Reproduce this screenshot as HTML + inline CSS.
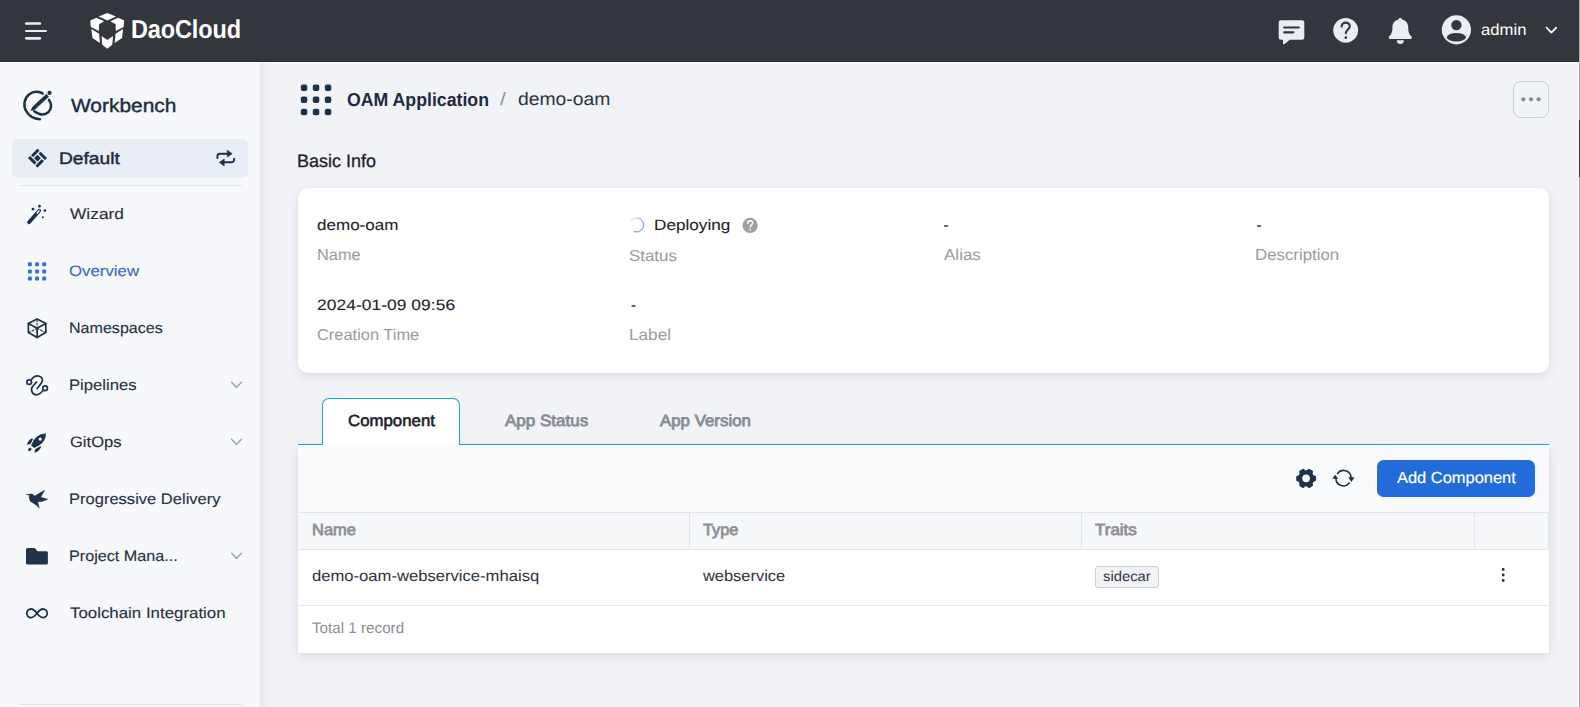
<!DOCTYPE html>
<html lang="en">
<head>
<meta charset="utf-8">
<title>OAM Application - demo-oam</title>
<style>
*{box-sizing:border-box;margin:0;padding:0}
html,body{width:1580px;height:707px;overflow:hidden;background:#f1f3f7}
body{position:relative;font-family:"Liberation Sans",sans-serif;color:#1f2329}
.abs{position:absolute}
.t{position:absolute;white-space:nowrap;line-height:20px;height:20px;transform-origin:0 50%;text-rendering:geometricPrecision}
svg{position:absolute;overflow:visible}
/* header */
#hdr{left:0;top:0;width:1579px;height:62px;background:#33363c;border-bottom:1px solid #2a2d32}
#hline{left:0;top:62px;width:1579px;height:1px;background:#fff}
/* sidebar */
#side{left:0;top:63px;width:260px;height:644px;background:#f6f8fc}
#sideshadow{left:260px;top:63px;width:12px;height:644px;background:linear-gradient(90deg,rgba(0,0,0,.05),rgba(0,0,0,.03) 18%,rgba(0,0,0,.016) 45%,rgba(0,0,0,.006) 75%,rgba(0,0,0,0))}
#defbox{left:12px;top:139px;width:236px;height:39px;border-radius:6px;background:#e9edf6}
.divd{left:19px;width:223px;height:1px;background:#e2e5eb}
.mi{color:#27313f;font-size:15.1px;-webkit-text-stroke:.12px #27313f}
/* main */
#card{left:298px;top:188px;width:1251px;height:185px;border-radius:10px;background:#fff;box-shadow:0 3px 10px rgba(0,0,0,.10)}
.val{font-size:15px;color:#1f2329;-webkit-text-stroke:.1px #1f2329}
.lab{font-size:15.85px;color:#9b9da3;-webkit-text-stroke:.05px #9b9da3}
#panel{left:298px;top:445px;width:1251px;height:208px;background:#fff;box-shadow:0 3px 10px rgba(0,0,0,.11)}
#tbar{left:298px;top:445px;width:1251px;height:67px;background:#f9fafc}
#thead{left:298px;top:512px;width:1251px;height:38px;background:#f7f8fa;border-top:1px solid #e3e6ec;border-bottom:1px solid #e3e6ec}
.vsep{top:513px;width:1px;height:36px;background:#e3e6ec}
#rowline{left:298px;top:605px;width:1251px;height:1px;background:#e6e8ed}
#tabline{left:298px;top:444px;width:1251px;height:1px;background:#1f9ae6}
#tab1{left:322px;top:398px;width:138px;height:47px;border:1px solid #1f9ae6;border-bottom:0;border-radius:7px 7px 0 0;background:#fff}
.th{font-size:16px;color:#8e9096;-webkit-text-stroke:.8px #8e9096}
.td{font-size:15.5px;color:#30353d;-webkit-text-stroke:.05px #30353d}
#btn{left:1377px;top:460px;width:158px;height:37px;border-radius:6.5px;background:#236bda}
#morebtn{left:1513px;top:81px;width:36px;height:37px;border:1px solid #c9ceda;border-radius:8px}
#tag{left:1095px;top:566px;width:64px;height:22px;border:1px solid #c9cdd5;border-radius:3px;background:#f2f3f6}
#rstrip{left:1579px;top:0;width:1px;height:707px;background:#a6a8ab}
#rstrip2{left:1578px;top:63px;width:1px;height:644px;background:#fafbfc}
#rdark{left:1579px;top:120px;width:1px;height:57px;background:#2e3136}
</style>
</head>
<body>
<!-- backgrounds -->
<div class="abs" id="side"></div>
<div class="abs" id="sideshadow"></div>
<div class="abs" id="hdr"></div>
<div class="abs" id="hline"></div>

<!-- header text -->
<div class="t" id="x_dao" style="left:130.5px;top:19.8px;font-size:25.9px;font-weight:bold;color:#fff;transform:scaleX(0.9072);letter-spacing:-0.13px">DaoCloud</div>
<div class="t" id="x_admin" style="left:1480.9px;top:20.6px;font-size:16px;color:#fff;transform:scaleX(1.0423);letter-spacing:0.0px">admin</div>

<!-- sidebar -->
<div class="t" id="x_wb" style="left:71.1px;top:96.7px;font-size:19.0px;color:#1d2b3f;-webkit-text-stroke:.4px #1d2b3f;transform:scaleX(1.1003);letter-spacing:0.0px">Workbench</div>
<div class="abs" id="defbox"></div>
<div class="t" id="x_def" style="left:59.2px;top:149.2px;font-size:16.6px;-webkit-text-stroke:.45px #1d2b3f;color:#1d2b3f;transform:scaleX(1.1566);letter-spacing:-0.0px">Default</div>
<div class="abs divd" style="top:185px"></div>
<div class="t mi" id="x_m1" style="left:70.2px;top:204.6px;transform:scaleX(1.149);letter-spacing:0.0px">Wizard</div>
<div class="t mi" id="x_m2" style="left:69.2px;top:261.6px;color:#3c6fdc;transform:scaleX(1.113);letter-spacing:0.0px">Overview</div>
<div class="t mi" id="x_m3" style="left:68.5px;top:318.8px;transform:scaleX(1.0648);letter-spacing:0.0px">Namespaces</div>
<div class="t mi" id="x_m4" style="left:69.4px;top:375.7px;transform:scaleX(1.103);letter-spacing:-0.0px">Pipelines</div>
<div class="t mi" id="x_m5" style="left:70.3px;top:432.7px;transform:scaleX(1.0964);letter-spacing:0.0px">GitOps</div>
<div class="t mi" id="x_m6" style="left:69.4px;top:489.5px;transform:scaleX(1.0949);letter-spacing:0.0px">Progressive Delivery</div>
<div class="t mi" id="x_m7" style="left:68.5px;top:546.8px;transform:scaleX(1.072);letter-spacing:0.0px">Project Mana...</div>
<div class="t mi" id="x_m8" style="left:70.4px;top:604.0px;transform:scaleX(1.1171);letter-spacing:0.0px">Toolchain Integration</div>
<div class="abs divd" style="top:704px"></div>

<!-- breadcrumb -->
<div class="t" id="x_oam" style="left:347.1px;top:89.5px;font-size:18.75px;font-weight:bold;color:#1d2b3f;transform:scaleX(0.9442);letter-spacing:0.0px">OAM Application</div>
<div class="t" id="x_slash" style="left:499.8px;top:88.5px;font-size:18.0px;color:#8d929b;transform:scaleX(1.16);letter-spacing:0px">/</div>
<div class="t" id="x_bc" style="left:518.3px;top:88.5px;font-size:18.0px;color:#2b3340;transform:scaleX(1.0742);letter-spacing:0.0px">demo-oam</div>
<div class="abs" id="morebtn"></div>
<div class="t" id="x_basic" style="left:297.4px;top:151.3px;font-size:18.0px;color:#1f2329;-webkit-text-stroke:.3px #1f2329;transform:scaleX(0.9994);letter-spacing:0.0px">Basic Info</div>

<!-- card -->
<div class="abs" id="card"></div>
<div class="t val" id="x_v1" style="left:317.4px;top:215.5px;transform:scaleX(1.1353);letter-spacing:0.0px">demo-oam</div>
<div class="t lab" id="x_l1" style="left:316.8px;top:246.2px;transform:scaleX(1.0312);letter-spacing:0.0px">Name</div>
<div class="t val" id="x_v2" style="left:653.6px;top:215.5px;transform:scaleX(1.1437);letter-spacing:0.0px">Deploying</div>
<div class="t lab" id="x_l2" style="left:628.8px;top:247.1px;transform:scaleX(1.0664);letter-spacing:0.0px">Status</div>
<div class="t val" id="x_v3" style="left:943.5px;top:215.5px">-</div>
<div class="t lab" id="x_l3" style="left:944.2px;top:246.2px;transform:scaleX(1.0738);letter-spacing:0.0px">Alias</div>
<div class="t val" id="x_v4" style="left:1256.5px;top:215.5px">-</div>
<div class="t lab" id="x_l4" style="left:1255.2px;top:246.2px;transform:scaleX(1.0625);letter-spacing:0.0px">Description</div>
<div class="t val" id="x_v5" style="left:316.6px;top:296.2px;transform:scaleX(1.16);letter-spacing:0.04px">2024-01-09 09:56</div>
<div class="t lab" id="x_l5" style="left:316.6px;top:326.3px;transform:scaleX(1.0363);letter-spacing:0.0px">Creation Time</div>
<div class="t val" id="x_v6" style="left:631.1px;top:296.2px">-</div>
<div class="t lab" id="x_l6" style="left:628.9px;top:326.3px;transform:scaleX(1.0845);letter-spacing:0.0px">Label</div>

<!-- tabs + table -->
<div class="abs" id="panel"></div>
<div class="abs" id="tbar"></div>
<div class="abs" id="thead"></div>
<div class="abs vsep" style="left:689px"></div>
<div class="abs vsep" style="left:1081px"></div>
<div class="abs vsep" style="left:1474px"></div>
<div class="abs vsep" style="left:1548px"></div>
<div class="abs" id="rowline"></div>
<div class="abs" id="tabline"></div>
<div class="abs" id="tab1"></div>
<div class="t" id="x_tab1" style="left:347.7px;top:411.4px;font-size:16.1px;-webkit-text-stroke:.6px #1f2329;color:#1f2329;transform:scaleX(1.0444);letter-spacing:0.0px">Component</div>
<div class="t" id="x_tab2" style="left:504.6px;top:411.4px;font-size:16.1px;-webkit-text-stroke:.8px #878c96;color:#878c96;transform:scaleX(1.0559);letter-spacing:0.0px">App Status</div>
<div class="t" id="x_tab3" style="left:659.5px;top:411.4px;font-size:16.1px;-webkit-text-stroke:.8px #878c96;color:#878c96;transform:scaleX(1.0473);letter-spacing:0.0px">App Version</div>
<div class="abs" id="btn"></div>
<div class="t" id="x_btn" style="left:1396.5px;top:468.6px;font-size:16px;color:#fff;-webkit-text-stroke:.2px #fff;transform:scaleX(1.0273);letter-spacing:0.0px">Add Component</div>
<div class="t th" id="x_h1" style="left:311.9px;top:521.2px;transform:scaleX(1.0286);letter-spacing:-0.0px">Name</div>
<div class="t th" id="x_h2" style="left:703.4px;top:521.2px;transform:scaleX(1.0202);letter-spacing:0.0px">Type</div>
<div class="t th" id="x_h3" style="left:1095.1px;top:521.2px;transform:scaleX(1.0609);letter-spacing:0.0px">Traits</div>
<div class="t td" id="x_r1" style="left:311.8px;top:566.7px;transform:scaleX(1.0721);letter-spacing:0.0px">demo-oam-webservice-mhaisq</div>
<div class="t td" id="x_r2" style="left:703.4px;top:566.7px;transform:scaleX(1.0593);letter-spacing:0.0px">webservice</div>
<div class="abs" id="tag"></div>
<div class="t" id="x_tag" style="left:1102.6px;top:565.6px;font-size:14px;color:#30353d;transform:scaleX(1.0568);letter-spacing:0.0px">sidecar</div>
<div class="t" id="x_tot" style="left:311.8px;top:618.7px;font-size:15.2px;color:#8c9098;transform:scaleX(1.001);letter-spacing:0.0px">Total 1 record</div>

<svg id="icons" width="1580" height="707" viewBox="0 0 1580 707" style="left:0;top:0">
<!-- hamburger -->
<g stroke="#e8eefb" stroke-width="2.7" stroke-linecap="round" fill="none">
<path d="M26.3 23.5H39.8"/><path d="M26 30.9H46" stroke-width="2"/><path d="M26.3 38.3H39.8"/>
</g>
<!-- logo cube -->
<g fill="#fff">
<polygon points="98.8,16.5 107.3,12.9 116,16.5 107.3,20.5"/>
<polygon points="90.2,20.4 96.4,17.8 104.2,21.3 99.1,24.3 98.8,31.1 90.8,26.9"/>
<polygon points="124.2,20.4 118.2,17.8 110.4,21.3 115.6,24.3 115.8,31.1 123.6,26.9"/>
<polygon points="91.3,29.1 99.1,33.7 99.9,43.1 92.5,37.9"/>
<polygon points="123,29.1 115.6,33.7 114.6,43.1 122.1,37.9"/>
<polygon points="101.6,36.1 107.3,39.9 113,36.1 112.3,44.8 107.3,48.7 102.2,44.8"/>
</g>
<!-- chat icon -->
<g>
<path d="M1281 20.2h21a2.3 2.3 0 0 1 2.3 2.3v15a2.3 2.3 0 0 1-2.3 2.3h-12.2l-5.2 4.2c-.9.7-1.6.3-1.6-.8v-3.4h-2a2.3 2.3 0 0 1-2.3-2.3v-15a2.3 2.3 0 0 1 2.3-2.3z" fill="#e8edf8"/>
<path d="M1284.2 27.5h14.6M1284.2 32.3h9.2" stroke="#33363c" stroke-width="2.2" stroke-linecap="round"/>
</g>
<!-- help -->
<circle cx="1345.7" cy="30.3" r="12.4" fill="#e8edf8"/>
<path d="M1341.6 26.6c0-2.4 1.8-4 4.1-4s4.1 1.5 4.100 3.700c0 3.100-4.000 3.300-4.000 7.000" fill="none" stroke="#33363c" stroke-width="2.1" stroke-linecap="round"/>
<circle cx="1345.8" cy="37.7" r="1.35" fill="#33363c"/>
<!-- bell -->
<path d="M1400.300 17.900c1 0 1.800.600 1.900 1.500 3.700.900 6.000 4.000 6.000 8.000 0 5.000 1.300 7.000 3.300 9.000.700.700.300 2.500-1.000 2.500h-20.400c-1.300 0-1.700-1.800-1.000-2.500 2.000-2.000 3.300-4.000 3.300-9.000 0-4.000 2.300-7.100 6.000-8.000.100-.900.900-1.500 1.900-1.500z" fill="#e8edf8"/>
<path d="M1396.800 40.300h7.000a3.500 3.600 0 0 1-7.000 0z" fill="#e8edf8"/>
<!-- avatar -->
<circle cx="1456.400" cy="29.800" r="14.600" fill="#e8edf8"/>
<circle cx="1456.400" cy="25.100" r="5.200" fill="#33363c"/>
<ellipse cx="1456.400" cy="37.300" rx="9.500" ry="4.300" fill="#33363c"/>
<path d="M1546.600 27.600l4.800 5.000 4.800-5.000" fill="none" stroke="#fff" stroke-width="1.8" stroke-linecap="round" stroke-linejoin="round"/>

<!-- workbench icon -->
<g fill="none" stroke="#1d3149" stroke-width="2.5" stroke-linecap="round">
<path d="M42.700 93.600C39.500 91.200 33.500 91.000 29.300 94.300 24.300 98.200 22.800 105.300 26.200 111.200 29.000 116.000 34.000 119.000 39.900 119.200"/>
<path d="M48.800 99.800C50.600 102.300 51.600 105.800 50.500 108.900 48.900 113.300 43.800 115.500 39.600 114.000 37.400 113.300 35.600 112.200 34.200 111.200"/>
</g>
<path d="M46.300 94.400l2.100 2.200-13.500 12.700-3.600 1.200 1.400-3.500z" fill="#1d3149" stroke="#1d3149" stroke-width="0.900" stroke-linejoin="round"/>
<circle cx="49.500" cy="92.900" r="2.100" fill="#1d3149"/>

<!-- default icon -->
<g transform="translate(37.500 158.100) rotate(45)" fill="#1d3149">
<rect x="-2.400" y="-6.750" width="9.150" height="3.000" rx=".5"/>
<rect x="3.750" y="-2.400" width="3.000" height="9.150" rx=".5"/>
<rect x="-6.750" y="3.750" width="9.150" height="3.000" rx=".5"/>
<rect x="-6.750" y="-6.750" width="3.000" height="9.150" rx=".5"/>
<rect x="-2.400" y="-2.400" width="4.800" height="4.800" rx=".4"/>
</g>
<!-- swap icon -->
<g fill="none" stroke="#1d3149" stroke-width="1.900" stroke-linecap="round">
<path d="M217.400 158.000v-1.700a2.500 2.500 0 0 1 2.500-2.500h8"/>
<path d="M234.100 158.600v1.200a2.500 2.500 0 0 1-2.500 2.500h-7.600"/>
</g>
<polygon points="227.300,150.200 232.100,153.700 227.300,157.100" fill="#1d3149" stroke="#1d3149" stroke-width=".6" stroke-linejoin="round"/>
<polygon points="224.200,159.000 219.300,162.400 224.200,165.900" fill="#1d3149" stroke="#1d3149" stroke-width=".6" stroke-linejoin="round"/>

<!-- wizard -->
<path d="M29.000 222.300L39.200 210.700" stroke="#1d3149" stroke-width="3.600" stroke-linecap="round"/>
<path d="M37.200 213.000L39.100 210.800" stroke="#f6f8fc" stroke-width="1.500" stroke-linecap="round"/>
<g fill="#1d3149"><circle cx="33.000" cy="209.200" r="1.350"/><circle cx="39.400" cy="206.200" r="1.350"/><circle cx="44.900" cy="210.500" r="1.350"/><circle cx="42.800" cy="217.200" r="1.050"/></g>

<!-- overview grid (blue) -->
<g fill="#3b70e0">
<rect x="27.900" y="262.200" width="4" height="4" rx="1.200"/><rect x="35.050" y="262.200" width="4" height="4" rx="1.200"/><rect x="42.200" y="262.200" width="4" height="4" rx="1.200"/>
<rect x="27.900" y="269.400" width="4" height="4" rx="1.200"/><rect x="35.050" y="269.400" width="4" height="4" rx="1.200"/><rect x="42.200" y="269.400" width="4" height="4" rx="1.200"/>
<rect x="27.900" y="276.600" width="4" height="4" rx="1.200"/><rect x="35.050" y="276.600" width="4" height="4" rx="1.200"/><rect x="42.200" y="276.600" width="4" height="4" rx="1.200"/>
</g>

<!-- namespaces cube -->
<g fill="none" stroke="#1d3149" stroke-width="1.700" stroke-linejoin="round" stroke-linecap="round">
<polygon points="37.100,318.900 45.800,323.600 45.800,332.500 37.100,337.400 28.400,332.500 28.400,323.600"/>
<path d="M28.400 323.600L37.100 328.300 45.800 323.600M37.100 328.300V337.400"/>
<path d="M37.100 319.500V327.500M37.100 328.300L29.500 332.300M37.100 328.300L44.700 332.300" stroke-width="1.100" stroke-dasharray="2 1.800"/>
</g>

<!-- pipelines -->
<g fill="none" stroke="#1d3149" stroke-width="1.700" stroke-linecap="round">
<circle cx="29.200" cy="382.100" r="2.350"/>
<circle cx="45.100" cy="388.200" r="2.350"/>
<path d="M30.900 380.300C32.600 377.700 34.900 375.900 37.300 375.900 40.700 375.900 42.700 378.100 42.400 380.700 42.200 382.700 40.700 384.400 37.100 388.500"/>
<path d="M36.400 382.100L32.600 386.500C30.300 389.200 31.800 394.800 36.400 394.800 39.000 394.800 40.800 393.000 43.200 390.200"/>
</g>

<!-- rocket -->
<g fill="#1d3149">
<path d="M46.000 433.400C40.500 433.600 36.500 436.000 33.800 440.000L31.100 445.400 34.300 447.900 39.800 445.000C43.800 442.000 45.900 438.500 46.000 433.400z"/>
<path d="M32.000 438.300C29.300 439.600 27.500 442.000 26.900 444.700L30.500 443.900 33.000 439.300z"/>
<path d="M41.200 446.000C40.900 448.900 38.200 451.600 34.500 452.800L35.100 449.300 39.900 446.600z"/>
<ellipse cx="29.800" cy="449.300" rx="2.000" ry="1.300" transform="rotate(-45 29.800 449.300)"/>
</g>
<circle cx="40.200" cy="439.100" r="1.600" fill="#f6f8fc"/>

<!-- bird -->
<path d="M26.200 494.400L31.300 494.000C32.800 494.200 33.800 495.200 34.700 496.100L44.500 490.200 40.700 497.200 47.700 499.300 41.900 501.400 37.700 501.800 39.200 508.200 36.000 504.800 30.500 501.400 29.200 498.000 29.200 495.000z" fill="#1d3149" stroke="#1d3149" stroke-width=".5" stroke-linejoin="round"/>

<!-- folder -->
<path d="M27.500 548.000h6.500c.6 0 1.000.2 1.400.7l1.600 2.000c.3.300.6.500 1.100.500h8.300a1.500 1.500 0 0 1 1.500 1.500v10.300a1.500 1.500 0 0 1-1.500 1.500h-18.900a1.500 1.500 0 0 1-1.500-1.500v-13.500a1.500 1.500 0 0 1 1.500-1.500z" fill="#203349"/>

<!-- infinity -->
<path d="M37.000 613.300C35.000 610.700 33.300 609.000 31.100 609.000a4.300 4.300 0 0 0 0 8.600c2.200 0 3.900-1.700 5.900-4.300 2.000-2.600 3.700-4.300 5.900-4.300a4.300 4.300 0 0 1 0 8.600c-2.200 0-3.900-1.700-5.900-4.300z" fill="none" stroke="#1d3149" stroke-width="1.800"/>

<!-- sidebar chevrons -->
<g fill="none" stroke="#9aa3b1" stroke-width="1.300" stroke-linecap="round" stroke-linejoin="round">
<path d="M231.600 382.300l4.900 5.200 4.900-5.200"/>
<path d="M231.600 439.300l4.900 5.200 4.900-5.200"/>
<path d="M231.600 553.300l4.900 5.200 4.900-5.200"/>
</g>

<!-- breadcrumb grid icon -->
<g fill="#1d3149">
<rect x="300.800" y="84.600" width="6.500" height="6.500" rx="2"/><rect x="312.800" y="84.600" width="6.500" height="6.500" rx="2"/><rect x="324.800" y="84.600" width="6.500" height="6.500" rx="2"/>
<rect x="300.800" y="96.600" width="6.500" height="6.500" rx="2"/><rect x="312.800" y="96.600" width="6.500" height="6.500" rx="2"/><rect x="324.800" y="96.600" width="6.500" height="6.500" rx="2"/>
<rect x="300.800" y="108.700" width="6.500" height="6.500" rx="2"/><rect x="312.800" y="108.700" width="6.500" height="6.500" rx="2"/><rect x="324.800" y="108.700" width="6.500" height="6.500" rx="2"/>
</g>
<!-- more dots -->
<g fill="#838a97"><circle cx="1523.300" cy="99.300" r="2.100"/><circle cx="1531.000" cy="99.300" r="2.100"/><circle cx="1538.600" cy="99.300" r="2.100"/></g>

<!-- spinner -->
<g fill="none" stroke="#a3a8b2" stroke-width="1.300">
<path d="M630.950 220.940A6.900 6.900 0 0 1 636.600 218.000" opacity=".3"/>
<path d="M636.600 218.000A6.900 6.900 0 0 1 642.580 221.450" opacity=".65"/>
<path d="M642.580 221.450A6.900 6.900 0 0 1 634.240 231.380" stroke-linecap="round"/>
</g>
<!-- small help -->
<circle cx="750.100" cy="225.300" r="7.600" fill="#9a9fa8"/>
<path d="M747.700 223.200c0-1.500 1.100-2.500 2.500-2.500s2.500.9 2.500 2.300c0 1.900-2.400 2.000-2.400 4.000" fill="none" stroke="#fff" stroke-width="1.500" stroke-linecap="round"/>
<circle cx="750.200" cy="229.600" r=".95" fill="#fff"/>

<!-- gear -->
<g transform="translate(1306.100 478.400)">
<g fill="#1d3149">
<circle r="8.100"/>
<rect x="-3.000" y="-9.900" width="6.000" height="19.800" rx="1.600" transform="rotate(30)"/>
<rect x="-3.000" y="-9.900" width="6.000" height="19.800" rx="1.600" transform="rotate(90)"/>
<rect x="-3.000" y="-9.900" width="6.000" height="19.800" rx="1.600" transform="rotate(150)"/>
</g>
<circle r="3.800" fill="#f9fafc"/>
</g>
<!-- refresh -->
<g fill="none" stroke="#1d3149" stroke-width="1.600" stroke-linecap="round">
<path d="M1337.500 473.400A7.600 7.600 0 0 1 1351.100 477.500"/>
<path d="M1349.400 483.100A7.600 7.600 0 0 1 1335.900 478.900"/>
</g>
<polygon points="1348.300,477.300 1354.400,477.300 1351.400,481.900" fill="#1d3149"/>
<polygon points="1332.300,478.800 1338.400,478.800 1335.100,474.800" fill="#1d3149"/>

<!-- kebab -->
<g fill="#1d3149"><circle cx="1503.200" cy="569.500" r="1.400"/><circle cx="1503.200" cy="575.000" r="1.400"/><circle cx="1503.200" cy="580.500" r="1.400"/></g>
</svg>

<!-- right edge strip -->
<div class="abs" id="rstrip2"></div>
<div class="abs" id="rstrip"></div>
<div class="abs" id="rdark"></div>
</body>
</html>
